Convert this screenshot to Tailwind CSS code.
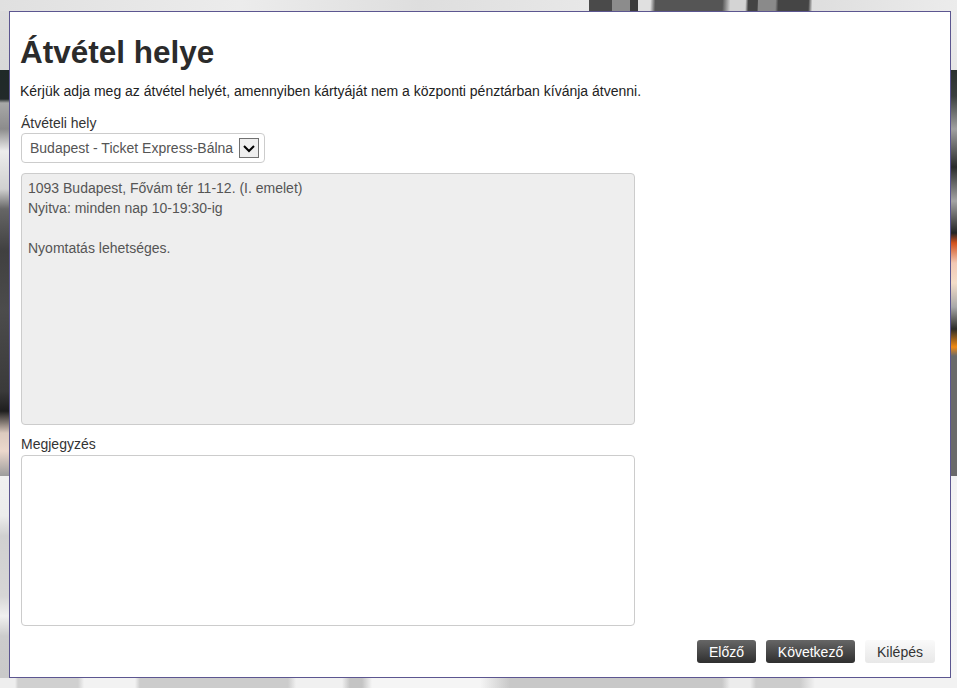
<!DOCTYPE html>
<html lang="hu">
<head>
    <meta charset="UTF-8">
    <title>Átvétel helye</title>
    <script src="https://cdn.jsdelivr.net/npm/@tailwindcss/browser@4"></script>
</head>
<body class="relative h-[688px] overflow-hidden bg-[#eeeeee] font-['Liberation_Sans',Arial,sans-serif]">
    <!-- blurred photo behind the dialog, only its edges show -->
    <div class="absolute inset-0 flex flex-col blur-[0.5px]">
        <div class="h-[11px] bg-[linear-gradient(92deg,#e0e0e0_0,#ececec_240px,#dedede_420px,#e8e8e8_589px,#4a4a4a_589px_612px,#8c8c8c_612px_630px,#3c3c3c_630px_638px,#e0e0e0_638px_650px,#555555_655px_722px,#d4d4d4_730px_745px,#444444_748px_757px,#8a8a8a_758px_775px,#454545_778px_808px,#dedede_812px,#ececec_957px)]"></div>
        <div class="flex flex-1 justify-between">
            <div class="w-[9px] bg-[linear-gradient(180deg,#dcdcdc_0,#d8d8d8_59px,#1f2a28_59px,#222a2a_88px,#a8a8a8_92px,#8c8c8c_118px,#ececec_140px,#d0d0d0_178px,#666666_198px,#404040_240px,#4c4c4c_300px,#3a3a3a_380px,#1e1e1e_400px,#dccabe_422px,#ecd8cc_440px,#9c9c9c_465px,#f0f0f0_465px,#ececec_505px,#d0d0d0_525px,#d6d6d6_585px,#f0f0f0_605px,#cccccc_625px,#c8c8c8_677px)]"></div>
            <div class="w-[6px] bg-[linear-gradient(180deg,#ececec_0,#e6e6e6_59px,#2a302e_59px,#3a3f3e_85px,#a0a0a0_118px,#2a2c2c_156px,#a4a4a4_190px,#242424_222px,#d2521e_232px,#f2c8b4_252px,#f4ddc8_272px,#a8a8a8_296px,#2c2c28_318px,#f08a14_336px,#6a6a6a_345px,#6a6a6a_465px,#f2f2f2_465px,#f4f4f4_677px)]"></div>
        </div>
        <div class="h-[10px] bg-[linear-gradient(90deg,#eeeeee_0_15px,#d0d0d0_18px_78px,#f2f2f2_84px_135px,#cccccc_140px_288px,#f0f0f0_296px_342px,#c4c4c4_350px_362px,#f5f5f5_372px_480px,#c8c8c8_510px_722px,#ececec_730px_750px,#cccccc_756px_800px,#f2f2f2_815px)]"></div>
    </div>

    <main class="relative ml-[9px] mt-[11px] flex h-[667px] w-[942px] flex-col border border-[#5c5690] bg-white px-[10px] text-sm text-[#222]">
        <h1 class="mt-[20px] text-[31.5px] leading-[40px] font-bold text-[#2b2b2b]">Átvétel helye</h1>
        <p class="mt-[9px] leading-[20px]">Kérjük adja meg az átvétel helyét, amennyiben kártyáját nem a központi pénztárban kívánja átvenni.</p>

        <label class="ml-px mt-[12px] leading-[20px] text-[#333]" for="hely">Átvételi hely</label>
        <div class="relative ml-px h-[30px] w-[244px]">
            <select id="hely" class="h-full w-full appearance-none rounded border border-[#cccccc] bg-white pl-2 text-sm text-[#555]">
                <option>Budapest - Ticket Express-Bálna</option>
            </select>
            <svg class="pointer-events-none absolute right-[6px] top-[5px] h-5 w-5" viewBox="0 0 20 20">
                <rect x="0.5" y="0.5" width="19" height="19" fill="#eeeeee" stroke="#707070"/>
                <path d="M5 8l5 5 5-5" fill="none" stroke="#000" stroke-width="2"/>
            </svg>
        </div>

        <div class="ml-px mt-[10px] h-[252px] w-[614px] rounded border border-[#cccccc] bg-[#eeeeee] px-[6px] py-[4px] leading-[20px] text-[#555]">
            <p>1093 Budapest, Fővám tér 11-12. (I. emelet)</p>
            <p>Nyitva: minden nap 10-19:30-ig</p>
            <p class="mt-[20px]">Nyomtatás lehetséges.</p>
        </div>

        <label class="ml-px mt-[9px] leading-[20px] text-[#333]" for="megj">Megjegyzés</label>
        <textarea id="megj" class="ml-px mt-px h-[171px] w-[614px] resize-none rounded border border-[#cccccc] bg-white"></textarea>

        <div class="mr-[5px] mt-[14px] flex justify-end gap-[10px]">
            <button class="h-[23px] w-[59px] rounded-[3px] bg-[linear-gradient(180deg,#666666,#2f2f2f)] text-sm text-white">Előző</button>
            <button class="h-[23px] w-[89px] rounded-[3px] bg-[linear-gradient(180deg,#666666,#2f2f2f)] text-sm text-white">Következő</button>
            <button class="h-[23px] w-[70px] rounded-[3px] bg-[linear-gradient(180deg,#fafafa,#e8e8e8)] text-sm text-[#333]">Kilépés</button>
        </div>
    </main>
</body>
</html>
